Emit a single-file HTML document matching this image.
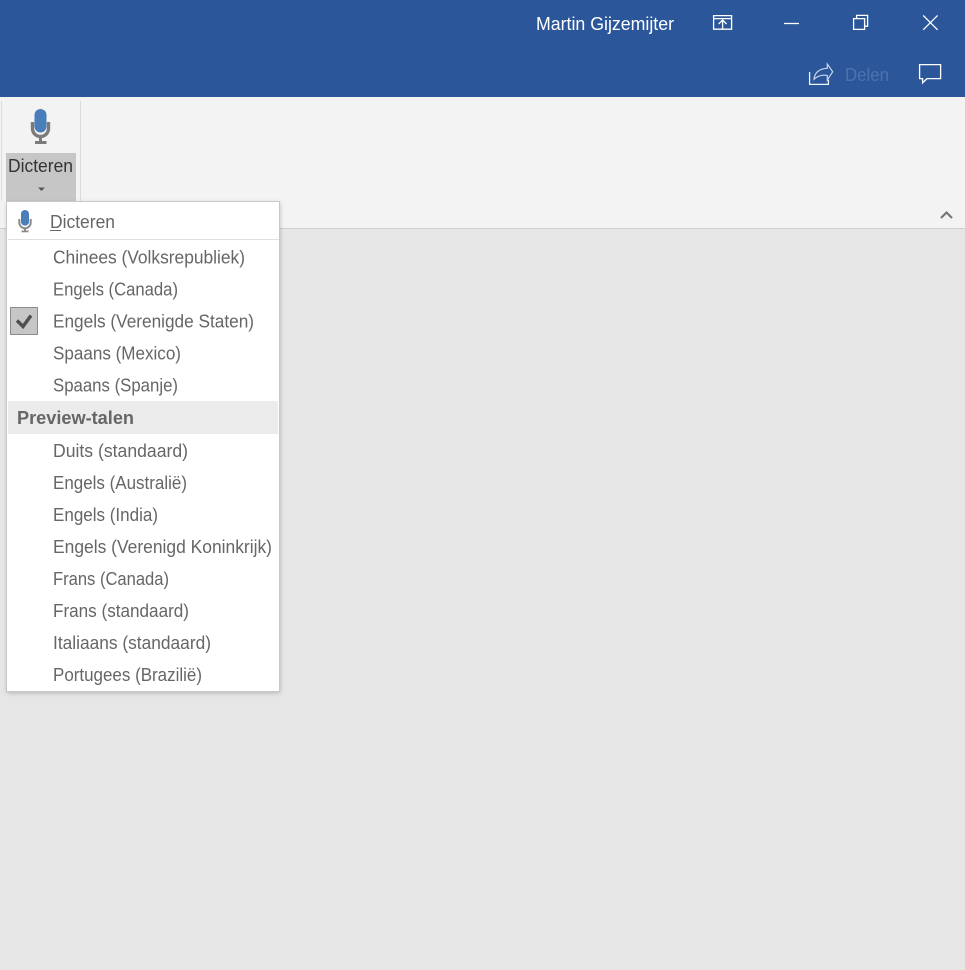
<!DOCTYPE html>
<html><head><meta charset="utf-8"><style>
html,body{margin:0;padding:0;background:#e6e6e6;width:965px;height:970px;overflow:hidden}
svg{display:block}
text{font-family:"Liberation Sans",sans-serif;font-size:18px;fill:#666}
</style></head><body>
<svg width="965" height="970" viewBox="0 0 965 970" xmlns="http://www.w3.org/2000/svg">
<defs><filter id="s" x="-10%" y="-5%" width="120%" height="110%"><feGaussianBlur stdDeviation="2.5"/></filter></defs>
<rect width="965" height="970" fill="#e6e6e6"/>
<rect width="965" height="97" fill="#2b579a"/>
<rect y="97" width="965" height="131" fill="#f3f3f3"/>
<rect y="228" width="965" height="1" fill="#cfcfcf"/>
<rect x="1" y="101" width="1" height="100" fill="#dcdcdc"/>
<rect x="80" y="101" width="1" height="127" fill="#dcdcdc"/>

<text x="536" y="30" textLength="138" lengthAdjust="spacingAndGlyphs" style="fill:#fff">Martin Gijzemijter</text>
<g fill="none" stroke="#fff" stroke-width="1.3">
<path d="M713.6 15.6h18v13.6h-18zM713.6 18.6h18M722.6 29v-9M718.6 24l4-4 4 4"/>
<path d="M784 23.5h15"/>
<path d="M853.6 18.6h11v10.8h-11zM856.6 18.6v-3.2h11v10.8h-3"/>
<path d="M923.2 15.4l14.4 14.4M937.6 15.4l-14.4 14.4"/>
<path d="M809.6 72v12.4h18.8v-4.6" stroke="#f0f4fa"/>
<path d="M814 79.3C814.5 73 819 68.5 827.3 68.3V64L832.7 71.8 827.3 80V75.5C822 74.5 817.5 76 814 79.3z" stroke="#c7d4e8" stroke-width="1.2"/>
<path d="M919.6 64.6h21v14h-13.6l-4.4 4.2v-4.2h-3z"/>
</g>
<text x="845" y="81" textLength="44" lengthAdjust="spacingAndGlyphs" style="fill:#4a73ad">Delen</text>

<rect x="6" y="153" width="70" height="50" fill="#c6c6c6"/>
<path d="M32.5 122v6.5a8 8 0 0 0 16 0V122" fill="none" stroke="#7b7b7b" stroke-width="3.4"/>
<rect x="39" y="135" width="3" height="7" fill="#7b7b7b"/>
<rect x="35" y="141" width="11.5" height="3" fill="#7b7b7b"/>
<rect x="34.5" y="109" width="12" height="23.5" rx="6" fill="#4a7ebb"/>
<text x="8" y="172" textLength="65" lengthAdjust="spacingAndGlyphs" style="fill:#333">Dicteren</text>
<path d="M38 187.5h7l-3.5 3.5z" fill="#555"/>
<path d="M941 218l5.5-5.5 5.5 5.5" fill="none" stroke="#777" stroke-width="2.2"/>

<rect x="7" y="203" width="273" height="490" fill="#000" opacity=".22" filter="url(#s)"/>
<rect x="6.5" y="201.5" width="273" height="490" fill="#fff" stroke="#c8c8c8"/>
<path d="M19.3 219v3.5a5.7 5.7 0 0 0 11.4 0V219" fill="none" stroke="#8a8a8a" stroke-width="2"/>
<rect x="24" y="228" width="2" height="4" fill="#8a8a8a"/>
<rect x="21.5" y="230.5" width="7" height="1.8" fill="#8a8a8a"/>
<rect x="21" y="210" width="8" height="15.7" rx="4" fill="#4a7ebb"/>
<text x="50" y="228" textLength="65" lengthAdjust="spacingAndGlyphs">Dicteren</text>
<rect x="50" y="230" width="11" height="1" fill="#666"/>
<rect x="8" y="239" width="271" height="1" fill="#e0e0e0"/>

<rect x="10.5" y="307.5" width="27" height="27" fill="#c6c6c6" stroke="#8c8c8c"/>
<path d="M17 320.5l6 6 8-11" fill="none" stroke="#4f4f4f" stroke-width="3.4"/>
<rect x="8" y="401" width="270" height="33" fill="#ebebeb"/>

<text x="53" y="263.5" textLength="192" lengthAdjust="spacingAndGlyphs">Chinees (Volksrepubliek)</text>
<text x="53" y="295.5" textLength="125" lengthAdjust="spacingAndGlyphs">Engels (Canada)</text>
<text x="53" y="327.5" textLength="201" lengthAdjust="spacingAndGlyphs">Engels (Verenigde Staten)</text>
<text x="53" y="359.5" textLength="128" lengthAdjust="spacingAndGlyphs">Spaans (Mexico)</text>
<text x="53" y="391.5" textLength="125" lengthAdjust="spacingAndGlyphs">Spaans (Spanje)</text>
<text x="17" y="424" textLength="117" lengthAdjust="spacingAndGlyphs" style="font-weight:bold">Preview-talen</text>
<text x="53" y="457" textLength="135" lengthAdjust="spacingAndGlyphs">Duits (standaard)</text>
<text x="53" y="489" textLength="134" lengthAdjust="spacingAndGlyphs">Engels (Australië)</text>
<text x="53" y="521" textLength="105" lengthAdjust="spacingAndGlyphs">Engels (India)</text>
<text x="53" y="553" textLength="219" lengthAdjust="spacingAndGlyphs">Engels (Verenigd Koninkrijk)</text>
<text x="53" y="585" textLength="116" lengthAdjust="spacingAndGlyphs">Frans (Canada)</text>
<text x="53" y="617" textLength="136" lengthAdjust="spacingAndGlyphs">Frans (standaard)</text>
<text x="53" y="649" textLength="158" lengthAdjust="spacingAndGlyphs">Italiaans (standaard)</text>
<text x="53" y="681" textLength="149" lengthAdjust="spacingAndGlyphs">Portugees (Brazilië)</text>
</svg>
</body></html>
